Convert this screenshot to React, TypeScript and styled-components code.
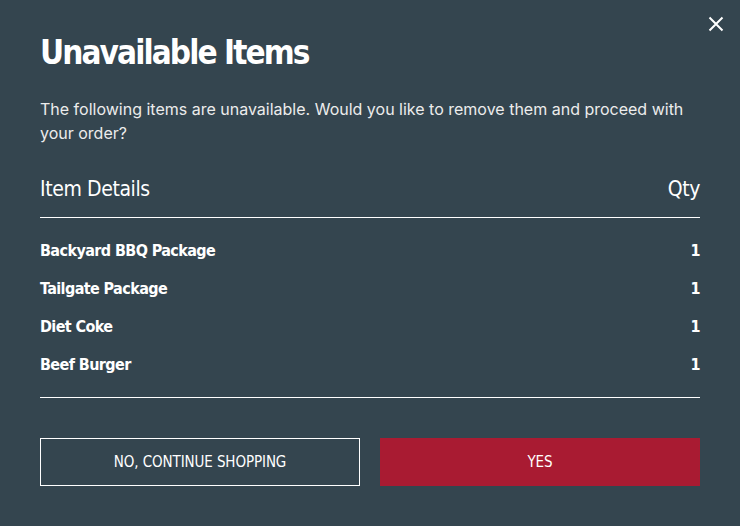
import React from "react";
import styled, { createGlobalStyle } from "styled-components";

const Global = createGlobalStyle`
  html, body { margin: 0; padding: 0; background: #34454f; }
  * { box-sizing: border-box; }
`;

const Modal = styled.div`
  position: relative;
  width: 740px;
  height: 526px;
  background: #34454f;
  color: #fff;
  padding: 31px 40px 0 40px;
  display: flex;
  flex-direction: column;
`;

const Close = styled.button`
  position: absolute;
  top: 16px;
  right: 16px;
  width: 16px;
  height: 16px;
  padding: 0;
  border: 0;
  background: none;
  cursor: pointer;
  display: flex;
`;

const Title = styled.h1`
  margin: 0;
  font-family: "DejaVu Sans Condensed", sans-serif;
  font-weight: 700;
  font-size: 33px;
  line-height: 44px;
  letter-spacing: -1.9px;
`;

const Lead = styled.p`
  margin: 22px 0 0 0;
  font-family: Inter, sans-serif;
  font-size: 16px;
  line-height: 24px;
  color: #ececec;
`;

const HeaderRow = styled.div`
  margin-top: 26px;
  display: flex;
  justify-content: space-between;
  align-items: center;
  line-height: 36px;
  padding-bottom: 10px;
  border-bottom: 1px solid #fff;
  font-family: "DejaVu Sans Condensed", sans-serif;
  font-size: 21px;
  font-weight: 400;
  letter-spacing: -0.4px;
`;

const List = styled.div`
  padding: 13px 0 14px 0;
  border-bottom: 1px solid #fff;
  display: flex;
  flex-direction: column;
`;

const ItemRow = styled.div`
  display: flex;
  justify-content: space-between;
  align-items: center;
  height: 38px;
  font-family: "DejaVu Sans Condensed", sans-serif;
  font-weight: 700;
  font-size: 16px;
  letter-spacing: -0.6px;
`;

const Actions = styled.div`
  margin-top: 40px;
  display: grid;
  grid-template-columns: 1fr 1fr;
  gap: 20px;
`;

const Button = styled.button<{ $primary?: boolean }>`
  height: 48px;
  border: 1px solid ${(p) => (p.$primary ? "#a91b32" : "#fff")};
  background: ${(p) => (p.$primary ? "#a91b32" : "transparent")};
  color: #fff;
  font-family: "DejaVu Sans Condensed", sans-serif;
  font-size: 15px;
  font-weight: 400;
  text-transform: uppercase;
  letter-spacing: -0.1px;
  cursor: pointer;
`;

const items = ["Backyard BBQ Package", "Tailgate Package", "Diet Coke", "Beef Burger"];

export default function App() {
  return (
    <>
      <Global />
      <Modal>
        <Close aria-label="Close">
          <svg width="16" height="16" viewBox="0 0 16 16">
            <path d="M1.5 1.5 L14.5 14.5 M14.5 1.5 L1.5 14.5" stroke="#fff" strokeWidth="2" />
          </svg>
        </Close>
        <Title>Unavailable Items</Title>
        <Lead>
          The following items are unavailable. Would you like to remove them and proceed with your order?
        </Lead>
        <HeaderRow>
          <span>Item Details</span>
          <span>Qty</span>
        </HeaderRow>
        <List>
          {items.map((it) => (
            <ItemRow key={it}>
              <span>{it}</span>
              <span>1</span>
            </ItemRow>
          ))}
        </List>
        <Actions>
          <Button>No, continue shopping</Button>
          <Button $primary>Yes</Button>
        </Actions>
      </Modal>
    </>
  );
}
